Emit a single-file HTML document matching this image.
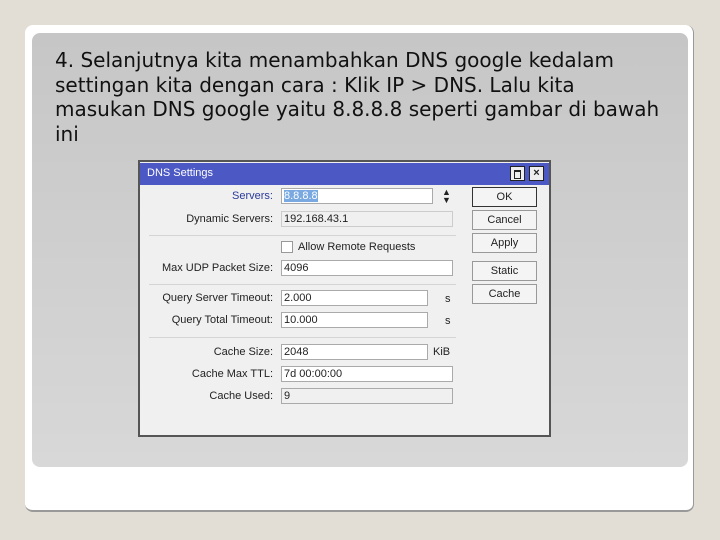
<!DOCTYPE html>
<html><head><style>
body{margin:0;width:720px;height:540px;background:#e3ded5;position:relative;overflow:hidden;font-family:"DejaVu Sans","Liberation Sans",sans-serif}
.card{position:absolute;left:25px;top:25px;width:669px;height:487px;background:#fff;border-radius:8px;border-right:1px solid #999;border-bottom:2px solid #999;box-sizing:border-box}
.panel{position:absolute;left:32px;top:33px;width:656px;height:434px;background:linear-gradient(#c6c6c6,#d8d8d8);border-radius:8px}
.txt{position:absolute;left:55px;top:48px;font-size:20px;line-height:24.5px;color:#111;white-space:nowrap}
.dlg{position:absolute;left:138px;top:160px;width:413px;height:277px;background:#f0f0f0;border:2px solid #555;box-sizing:border-box;font-family:"Liberation Sans",sans-serif;font-size:11px;color:#222}
.a{position:absolute}
.tb{left:0;top:1px;width:409px;height:22px;background:#4c58c4}
.lbl{position:absolute;right:276px;text-align:right;white-space:nowrap;line-height:16px}
.in{position:absolute;height:16px;background:#fff;border:1px solid #aaa;box-sizing:border-box;padding-left:2px;line-height:14px}
.btn{position:absolute;left:332px;width:65px;height:20px;border:1px solid #999;box-sizing:border-box;text-align:center;line-height:18px;background:#f4f4f4}
.sep{position:absolute;left:9px;width:307px;height:1px;background:#d4d4d4}
</style></head><body>
<div class="card"></div>
<div class="panel"></div>
<div class="txt">4. Selanjutnya kita menambahkan DNS google kedalam<br>settingan kita dengan cara : Klik IP &gt; DNS. Lalu kita<br>masukan DNS google yaitu 8.8.8.8 seperti gambar di bawah<br>ini</div>
<div class="dlg">
 <div class="a tb"></div>
 <div class="a" style="left:7px;top:5px;color:#fff;font-size:11px">DNS Settings</div>
 <div class="a" style="left:370px;top:4px;width:15px;height:15px;background:#eee;border:1px solid #222;box-sizing:border-box"><div style="margin:3px;height:6px;border:1px solid #222;border-top-width:2px"></div></div>
 <div class="a" style="left:389px;top:4px;width:15px;height:15px;background:#eee;border:1px solid #222;box-sizing:border-box;font-size:11px;line-height:12px;text-align:center;font-weight:bold">×</div>
 <div class="lbl" style="top:26px;color:#2a3a9a">Servers:</div>
 <div class="in" style="left:141px;top:26px;width:152px"><span style="background:#7aa8e0;color:#fff">8.8.8.8</span></div>
 <div class="a" style="left:302px;top:26px;font-size:9px;line-height:8px">▲<br>▼</div>
 <div class="lbl" style="top:49px">Dynamic Servers:</div>
 <div class="in" style="left:141px;top:49px;width:172px;background:#f0f0f0;border-color:#ccc">192.168.43.1</div>
 <div class="sep" style="top:73px"></div>
 <div class="a" style="left:141px;top:79px;width:12px;height:12px;background:#fff;border:1px solid #999;box-sizing:border-box"></div>
 <div class="a" style="left:158px;top:79px">Allow Remote Requests</div>
 <div class="lbl" style="top:98px">Max UDP Packet Size:</div>
 <div class="in" style="left:141px;top:98px;width:172px">4096</div>
 <div class="sep" style="top:122px"></div>
 <div class="lbl" style="top:128px">Query Server Timeout:</div>
 <div class="in" style="left:141px;top:128px;width:147px">2.000</div>
 <div class="a" style="left:305px;top:131px">s</div>
 <div class="lbl" style="top:150px">Query Total Timeout:</div>
 <div class="in" style="left:141px;top:150px;width:147px">10.000</div>
 <div class="a" style="left:305px;top:153px">s</div>
 <div class="sep" style="top:175px"></div>
 <div class="lbl" style="top:182px">Cache Size:</div>
 <div class="in" style="left:141px;top:182px;width:147px">2048</div>
 <div class="a" style="left:293px;top:184px">KiB</div>
 <div class="lbl" style="top:204px">Cache Max TTL:</div>
 <div class="in" style="left:141px;top:204px;width:172px">7d 00:00:00</div>
 <div class="lbl" style="top:226px">Cache Used:</div>
 <div class="in" style="left:141px;top:226px;width:172px;background:#f0f0f0">9</div>
 <div class="btn" style="top:25px;border-color:#333">OK</div>
 <div class="btn" style="top:48px">Cancel</div>
 <div class="btn" style="top:71px">Apply</div>
 <div class="btn" style="top:99px">Static</div>
 <div class="btn" style="top:122px">Cache</div>
</div>
</body></html>
